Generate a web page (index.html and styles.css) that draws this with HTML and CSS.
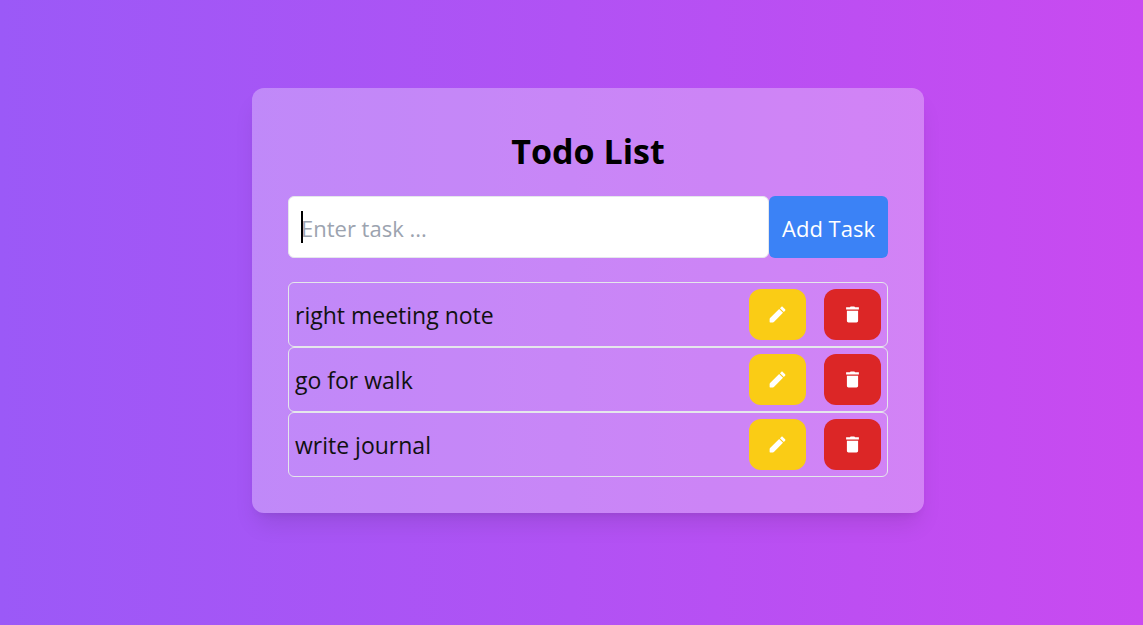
FILE: index.html
```html
<!DOCTYPE html>
<html lang="en">
<head>
<meta charset="utf-8">
<meta name="viewport" content="width=device-width, initial-scale=1">
<title>Todo List</title>
<link rel="stylesheet" href="styles.css">
</head>
<body>
<svg class="sprite" aria-hidden="true">
  <symbol id="edit" viewBox="0 0 24 24"><path d="M3 17.200v3.300c0 .3.200.5.500.5h3.300c.4 0 .8-.2 1.100-.5L18.300 10.100l-4.400-4.400L3.500 16.100c-.3.300-.5.700-.5 1.100zM20.700 7.700c.5-.5.500-1.200 0-1.700l-2.700-2.700c-.5-.5-1.200-.5-1.700 0l-1.500 1.500 4.400 4.400 1.500-1.500z"/></symbol>
  <symbol id="trash" viewBox="0 0 24 24"><path d="M5.600 7.600v11.600c0 1.100.8 1.800 1.800 1.800h9.200c1 0 1.800-.7 1.800-1.800V7.600zM19.300 3.800h-4.300l-.9-1H9.900l-.9 1H4.700v2.400h14.600z"/></symbol>
</svg>
<main class="page">
  <section class="card">
    <h1 class="title">Todo List</h1>
    <form class="entry">
      <div class="field">
        <input class="entry-input" type="text" placeholder="Enter task ..." aria-label="Task">
        <span class="caret" aria-hidden="true"></span>
      </div>
      <button class="add" type="button">Add Task</button>
    </form>
    <ul class="tasks">
      <li class="task">
        <span class="task-name">right meeting note</span>
        <button class="action edit" type="button" aria-label="Edit"><svg class="icon"><use href="#edit"/></svg></button>
        <button class="action delete" type="button" aria-label="Delete"><svg class="icon"><use href="#trash"/></svg></button>
      </li>
      <li class="task">
        <span class="task-name">go for walk</span>
        <button class="action edit" type="button" aria-label="Edit"><svg class="icon"><use href="#edit"/></svg></button>
        <button class="action delete" type="button" aria-label="Delete"><svg class="icon"><use href="#trash"/></svg></button>
      </li>
      <li class="task">
        <span class="task-name">write journal</span>
        <button class="action edit" type="button" aria-label="Edit"><svg class="icon"><use href="#edit"/></svg></button>
        <button class="action delete" type="button" aria-label="Delete"><svg class="icon"><use href="#trash"/></svg></button>
      </li>
    </ul>
  </section>
</main>
</body>
</html>
```
FILE: styles.css
```css
* { box-sizing: border-box; }
body {
  margin: 0;
  font-family: "Open Sans", "Noto Sans", sans-serif;
  font-size: 23px;
  line-height: 36px;
  color: #000;
}
.sprite { display: none; }
.page {
  min-height: 100vh;
  display: flex;
  align-items: center;
  justify-content: center;
  padding: 0 0 24px 33px;
  background: linear-gradient(to right, #9b59f7, #b152f4 50%, #c94af0);
}
.card {
  width: 100%;
  max-width: 672px;
  padding: 36px;
  border-radius: 12px;
  background: rgba(255, 255, 255, 0.3);
  box-shadow: 0 15px 23px -5px rgba(0, 0, 0, 0.1), 0 6px 9px -6px rgba(0, 0, 0, 0.1);
}
.title {
  margin: 0 0 18px;
  font-size: 34px;
  line-height: 54px;
  font-weight: 700;
  text-align: center;
}
.entry {
  display: flex;
  margin-bottom: 24px;
  font-size: 22px;
}
.field { position: relative; flex: 1; display: flex; }
.entry-input {
  width: 100%;
  min-width: 0;
  padding: 13px 12px 11px;
  border: 1px solid #e5e7eb;
  border-radius: 6px;
  background: #fff;
  font: inherit;
  color: inherit;
  outline: none;
}
.entry-input::placeholder { color: #9ca3af; opacity: 1; }
.caret {
  position: absolute;
  left: 13px;
  top: 15px;
  bottom: 15px;
  width: 2px;
  background: #000;
}
.add {
  padding: 14px 13px 12px;
  border: 0;
  border-radius: 6px;
  background: #3b82f6;
  color: #fff;
  font: inherit;
}
.tasks { margin: 0; padding: 0; list-style: none; }
.task {
  display: flex;
  align-items: center;
  gap: 18px;
  padding: 6px;
  border: 1px solid #e5e7eb;
  border-radius: 6px;
}
.task-name { flex: 1; color: #111; }
.action {
  display: flex;
  padding: 15px 18px;
  border: 0;
  border-radius: 12px;
  color: #fff;
}
.edit { background: #facc15; }
.delete { background: #dc2626; }
.icon { display: block; width: 21px; height: 21px; fill: currentColor; }
```
